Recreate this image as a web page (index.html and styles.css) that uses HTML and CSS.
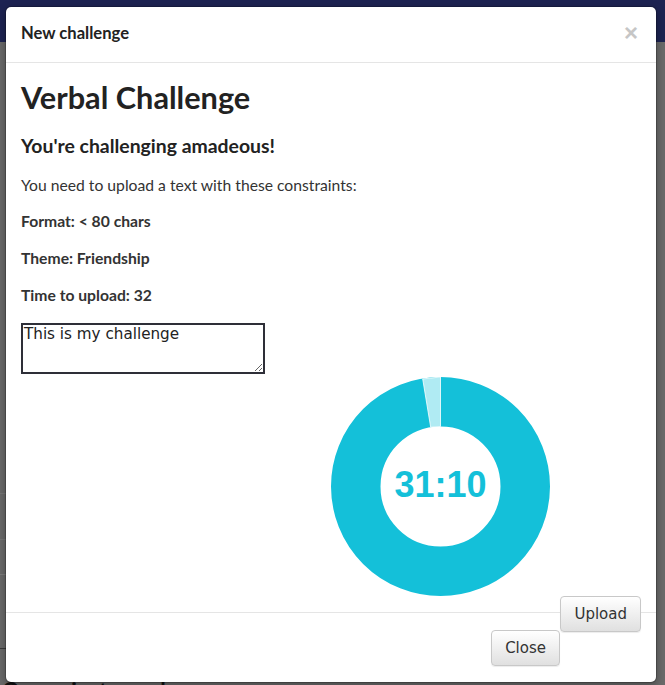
FILE: index.html
```html
<!DOCTYPE html>
<html>
<head>
<meta charset="utf-8">
<link rel="stylesheet" href="styles.css">
</head>
<body>
<div class="page">
  <div class="navbar"></div>
  <div class="backdrop">
    <div class="bg-line l1"></div>
    <div class="bg-line l2"></div>
    <div class="bg-line l3"></div>
    <div class="bg-line l4"></div>
    <div class="bg-text">On against amadeous</div>
  </div>
</div>
<div class="modal">
  <div class="modal-header">
    <h4 class="modal-title">New challenge</h4>
    <span class="close">&times;</span>
  </div>
  <div class="modal-body">
    <h1 class="title">Verbal Challenge</h1>
    <h3 class="subtitle">You're challenging amadeous!</h3>
    <p class="intro">You need to upload a text with these constraints:</p>
    <p class="rule">Format: &lt; 80 chars</p>
    <p class="rule">Theme: Friendship</p>
    <p class="rule">Time to upload: 32</p>
    <textarea class="answer" autofocus>This is my challenge</textarea>
    <div class="chart-row">
      <div></div>
      <div class="chart">
        <svg width="219" height="219" viewBox="0 0 219 219">
          <circle cx="109.5" cy="109.5" r="84.75" fill="none" stroke="#14c0d9" stroke-width="49.5"/>
          <path d="M109.5 0 L91.7 1.96 L99.7 50.3 L109.5 49.5 Z" fill="#b0ebf3" stroke="#fff" stroke-width="0.8"/>
        </svg>
        <span class="timer">31:10</span>
      </div>
    </div>
    <div class="upload-row">
      <button class="btn">Upload</button>
    </div>
  </div>
  <div class="modal-footer">
    <button class="btn close-btn">Close</button>
  </div>
</div>
</body>
</html>
```

FILE: styles.css
```css
* { box-sizing: border-box; }
html, body { margin: 0; padding: 0; }
body {
  width: 665px;
  height: 685px;
  overflow: hidden;
  background: #6a6a6a;
  font-family: Lato, "Open Sans", sans-serif;
  color: #333;
  position: relative;
}
.page { height: 685px; display: flex; flex-direction: column; }
.navbar { height: 42px; background: #1d2352; flex: none; }
.backdrop { flex: 1; background: #6a6a6a; position: relative; }
.bg-line { position: absolute; left: 0; width: 6px; height: 1px; background: #777; }
.l1 { top: 451px; }
.l2 { top: 497px; }
.l3 { top: 532px; background: #7d7d7d; }
.l4 { top: 606px; background: #3a3a3a; }
.bg-text {
  position: absolute;
  left: 2px;
  top: 635px;
  font-size: 22px;
  font-weight: 700;
  color: #111;
  white-space: nowrap;
}

.modal {
  position: absolute;
  left: 5px;
  top: 6px;
  width: 652px;
  height: 677px;
  background: #fff;
  border: 1px solid rgba(0,0,0,0.2);
  border-radius: 6px;
  box-shadow: 0 3px 9px rgba(0,0,0,0.3);
  display: flex;
  flex-direction: column;
  background-clip: padding-box;
}
.modal-header {
  height: 56px;
  padding: 0 15px 3px;
  border-bottom: 1px solid #e5e5e5;
  display: flex;
  align-items: center;
  justify-content: space-between;
  flex: none;
}
.modal-title {
  margin: 0;
  font-size: 16.6px;
  font-weight: 700;
  color: #222;
}
.close {
  font-family: "Liberation Sans", Arial, sans-serif;
  font-size: 24px;
  font-weight: 700;
  color: #c6c6c6;
  line-height: 1;
  margin-right: 3px;
  margin-top: -1px;
}
.modal-body {
  padding: 15px 15px 15px 15px;
  display: flex;
  flex-direction: column;
  flex: none;
}
.title {
  margin: 3px 0 0;
  font-size: 30.7px;
  line-height: 34px;
  font-weight: 700;
  color: #222;
}
.subtitle {
  margin: 19px 0 0;
  font-size: 19.4px;
  line-height: 24px;
  font-weight: 700;
  color: #222;
}
.intro {
  margin: 17px 0 0;
  font-size: 15.7px;
  line-height: 20px;
}
.rule {
  margin: 16px 0 0;
  font-size: 15.7px;
  line-height: 20px;
  font-weight: 700;
}
.rule + .rule { margin-top: 17px; }
.answer {
  margin-top: 18px;
  width: 244px;
  height: 51px;
  border: 2px solid #2e2f38;
  padding: 0 1px;
  font-family: "DejaVu Sans", sans-serif;
  font-size: 15.2px;
  line-height: 18px;
  color: #222;
  outline: none;
  resize: vertical;
}
.chart-row {
  display: grid;
  grid-template-columns: 1fr 1fr;
  margin-top: 3px;
}
.chart {
  position: relative;
  width: 219px;
  height: 219px;
}
.chart svg { display: block; }
.timer {
  position: absolute;
  left: 0;
  right: 0;
  top: 88px;
  text-align: center;
  font-family: "Liberation Sans", Arial, sans-serif;
  font-size: 36px;
  font-weight: 700;
  line-height: 40px;
  color: #14c0d9;
}
.upload-row {
  display: flex;
  justify-content: flex-end;
  margin-bottom: -35px;
  position: relative;
  z-index: 1;
}
.btn {
  height: 36px;
  padding: 0 13px;
  font-family: "DejaVu Sans", sans-serif;
  font-size: 15px;
  color: #333;
  background: linear-gradient(#fff, #e0e0e0);
  border: 1px solid #c8c8c8;
  border-radius: 4px;
  box-shadow: inset 0 1px 0 rgba(255,255,255,.15), 0 1px 1px rgba(0,0,0,.075);
}
.modal-footer {
  border-top: 1px solid #e5e5e5;
  padding: 17px 15px 0 15px;
  display: flex;
  justify-content: flex-end;
  flex: none;
}
.close-btn { margin-right: 81px; }
```
